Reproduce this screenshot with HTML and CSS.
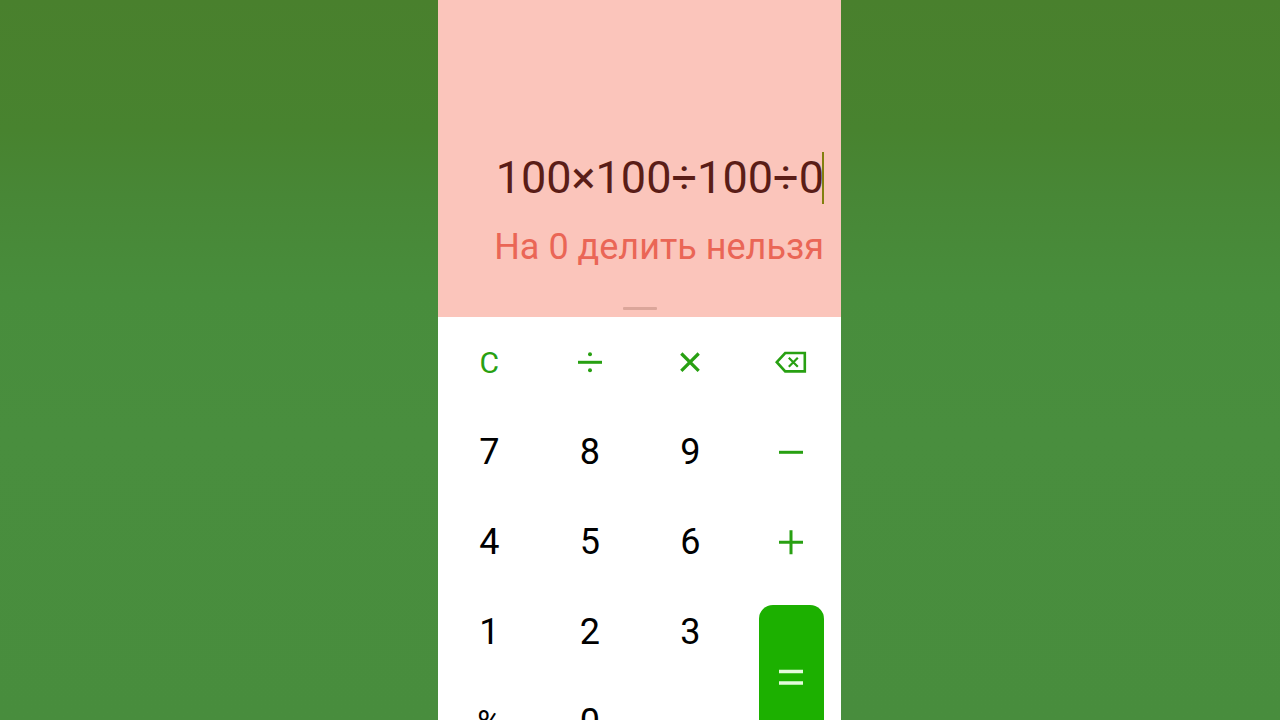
FILE: index.html
```
<!DOCTYPE html>
<html lang="ru">
<head>
    <meta charset="UTF-8">
    <meta name="viewport" content="width=device-width, initial-scale=1.0">
    <title>Калькулятор</title>
    <link rel="stylesheet" href="styles.css">
</head>
<body>
    <main class="calculator">
        <!-- Expression and error message -->
        <section class="display">
            <div class="expression-row">
                <input type="text" class="expression" id="expression" aria-label="Выражение" value="100×100÷100÷0" readonly>
                <span class="caret"></span>
            </div>
            <output class="message" for="expression">На 0 делить нельзя</output>
            <div class="handle"></div>
        </section>

        <!-- Keys -->
        <section class="keypad">
            <button type="button" class="key key-action">C</button>
            <button type="button" class="key key-action" aria-label="Разделить">
                <svg width="32" height="32" viewBox="0 0 32 32">
                    <path d="M4 16.3H28" stroke-width="3"/>
                    <circle cx="16" cy="8.3" r="2"/>
                    <circle cx="16" cy="24.3" r="2"/>
                </svg>
            </button>
            <button type="button" class="key key-action" aria-label="Умножить">
                <svg width="32" height="32" viewBox="0 0 32 32">
                    <path d="M7.3 7.5L24.7 24.9M24.7 7.5L7.3 24.9" stroke-width="3.2"/>
                </svg>
            </button>
            <button type="button" class="key key-action" aria-label="Стереть">
                <svg width="32" height="32" viewBox="0 0 32 32">
                    <path d="M1.8 16.2L10.2 7H29.8V25.4H10.2Z" stroke-width="2.6"/>
                    <path d="M13.8 11.7L22.8 20.7M22.8 11.7L13.8 20.7" stroke-width="2.2"/>
                </svg>
            </button>

            <button type="button" class="key">7</button>
            <button type="button" class="key">8</button>
            <button type="button" class="key">9</button>
            <button type="button" class="key key-action" aria-label="Вычесть">
                <svg width="32" height="32" viewBox="0 0 32 32">
                    <path d="M4 16.3H28" stroke-width="3"/>
                </svg>
            </button>

            <button type="button" class="key">4</button>
            <button type="button" class="key">5</button>
            <button type="button" class="key">6</button>
            <button type="button" class="key key-action" aria-label="Сложить">
                <svg width="32" height="32" viewBox="0 0 32 32">
                    <path d="M4 16.3H28M16 4.3V28.3" stroke-width="3"/>
                </svg>
            </button>

            <button type="button" class="key">1</button>
            <button type="button" class="key">2</button>
            <button type="button" class="key">3</button>
            <button type="button" class="key key-equals" aria-label="Равно">
                <svg width="32" height="32" viewBox="0 0 32 32">
                    <path d="M4 10.5H28M4 22H28" stroke-width="3.4"/>
                </svg>
            </button>

            <button type="button" class="key key-percent">%</button>
            <button type="button" class="key">0</button>
            <button type="button" class="key">,</button>
        </section>
    </main>
</body>
</html>
```
FILE: styles.css
```
* {
    box-sizing: border-box;
}

body {
    display: flex;
    justify-content: center;
    height: 100vh;
    margin: 0;
    padding-right: 1px;
    overflow: hidden;
    font-family: Roboto, "Liberation Sans", sans-serif;
    background: linear-gradient(#49802d 0%, #48832f 18%, #488736 27%, #488d3c 41%, #498e3e 60%, #488d3d 100%);
}

.calculator {
    width: 100%;
    max-width: 403px;
}

.display {
    display: flex;
    flex-direction: column;
    padding: 152px 17px 7px;
    background-color: #fbc5bb;
}

.expression-row {
    position: relative;
    display: flex;
}

.expression {
    width: 100%;
    height: 52px;
    padding: 0 0 2px;
    border: none;
    outline: none;
    background: none;
    font-family: inherit;
    font-size: 45px;
    text-align: right;
    color: #5a1d17;
}

/* sits over the right edge of the last digit */
.caret {
    position: absolute;
    top: 0;
    right: 0;
    width: 2px;
    height: 100%;
    background-color: #82800f;
}

.message {
    margin: 22px 0 39px;
    font-size: 36px;
    line-height: 42px;
    text-align: right;
    white-space: nowrap;
    color: #ea6656;
}

.handle {
    align-self: center;
    width: 34px;
    height: 3px;
    border-radius: 1px;
    background-color: #dba69a;
}

.keypad {
    display: grid;
    grid-template-columns: repeat(4, 1fr);
    grid-auto-rows: 90px;
    padding-left: 1px;
    background-color: #fff;
}

.key {
    display: flex;
    align-items: center;
    justify-content: center;
    padding: 0;
    border: none;
    background: none;
    font-family: inherit;
    font-size: 36px;
    color: #000;
    cursor: pointer;
}

.key svg {
    fill: none;
    stroke: currentColor;
}

.key circle {
    fill: currentColor;
    stroke: none;
}

.key-action {
    font-size: 30px;
    color: #28a012;
}

.key-percent {
    font-size: 33px;
}

.key-equals {
    grid-row: span 2;
    margin: 18px 17px 18px 18px;
    border-radius: 14px;
    background-color: #1cb000;
    color: #e4fbdc;
}
```
